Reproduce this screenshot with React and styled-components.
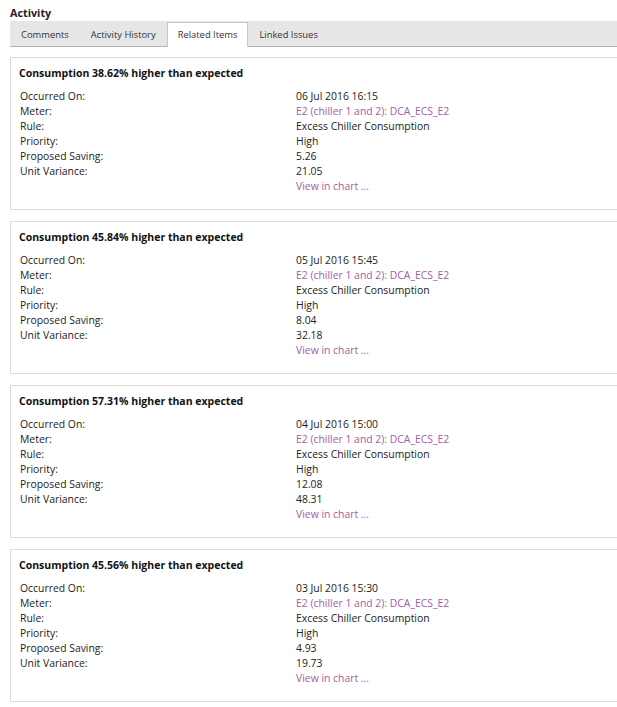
import React from "react";
import styled, { createGlobalStyle } from "styled-components";

const Global = createGlobalStyle`
  html, body { margin: 0; padding: 0; background: #fff; }
  body { font-family: "Open Sans", "Noto Sans", sans-serif; color: #1e1e1e; overflow: hidden; }
  * { box-sizing: border-box; }
`;

const Page = styled.div`
  width: 640px;
  padding: 5px 0 0 10px;
`;

const Heading = styled.div`
  font-weight: 700;
  font-size: 10.8px;
  line-height: 16px;
  color: #222;
`;

const TabBar = styled.div`
  display: flex;
  align-items: flex-end;
  height: 26px;
  background: #e6e6e6;
  border-bottom: 1px solid #b4b4b4;
`;

const Tab = styled.div`
  font-size: 9.4px;
  line-height: 14px;
  color: #333;
  padding: 0 10px;
  height: 25px;
  display: flex;
  align-items: center;
  margin-bottom: -1px;
  background: ${(p) => (p.$active ? "#fff" : "transparent")};
  border: 1px solid ${(p) => (p.$active ? "#c8c8c8" : "transparent")};
  border-bottom: none;
  padding-bottom: ${(p) => (p.$active ? "0" : "1px")};
`;

const List = styled.div`
  display: flex;
  flex-direction: column;
  gap: 11px;
  margin-top: 10px;
`;

const Card = styled.div`
  border: 1px solid #dadada;
  height: 153px;
  padding: 7px 8px 0 8px;
`;

const Title = styled.div`
  font-weight: 700;
  font-size: 10.5px;
  line-height: 16px;
  color: #111;
  margin-bottom: 8px;
`;

const Grid = styled.div`
  display: grid;
  grid-template-columns: 276px 1fr;
  padding-left: 1px;
  font-size: 10.4px;
  line-height: 15px;
`;

const Label = styled.div`
  color: #222;
`;

const Value = styled.div`
  color: ${(p) => (p.$link ? "#a060a8" : "#222")};
`;

const items = [
  { pct: "38.62", date: "06 Jul 2016 16:15", saving: "5.26", variance: "21.05" },
  { pct: "45.84", date: "05 Jul 2016 15:45", saving: "8.04", variance: "32.18" },
  { pct: "57.31", date: "04 Jul 2016 15:00", saving: "12.08", variance: "48.31" },
  { pct: "45.56", date: "03 Jul 2016 15:30", saving: "4.93", variance: "19.73" },
];

export default function App() {
  return (
    <Page>
      <Global />
      <Heading>Activity</Heading>
      <TabBar>
        <Tab>Comments</Tab>
        <Tab>Activity History</Tab>
        <Tab $active>Related Items</Tab>
        <Tab>Linked Issues</Tab>
      </TabBar>
      <List>
        {items.map((it) => (
          <Card key={it.date}>
            <Title>Consumption {it.pct}% higher than expected</Title>
            <Grid>
              <Label>Occurred On:</Label>
              <Value>{it.date}</Value>
              <Label>Meter:</Label>
              <Value $link>E2 (chiller 1 and 2): DCA_ECS_E2</Value>
              <Label>Rule:</Label>
              <Value>Excess Chiller Consumption</Value>
              <Label>Priority:</Label>
              <Value>High</Value>
              <Label>Proposed Saving:</Label>
              <Value>{it.saving}</Value>
              <Label>Unit Variance:</Label>
              <Value>{it.variance}</Value>
              <Label />
              <Value $link>View in chart ...</Value>
            </Grid>
          </Card>
        ))}
      </List>
    </Page>
  );
}
